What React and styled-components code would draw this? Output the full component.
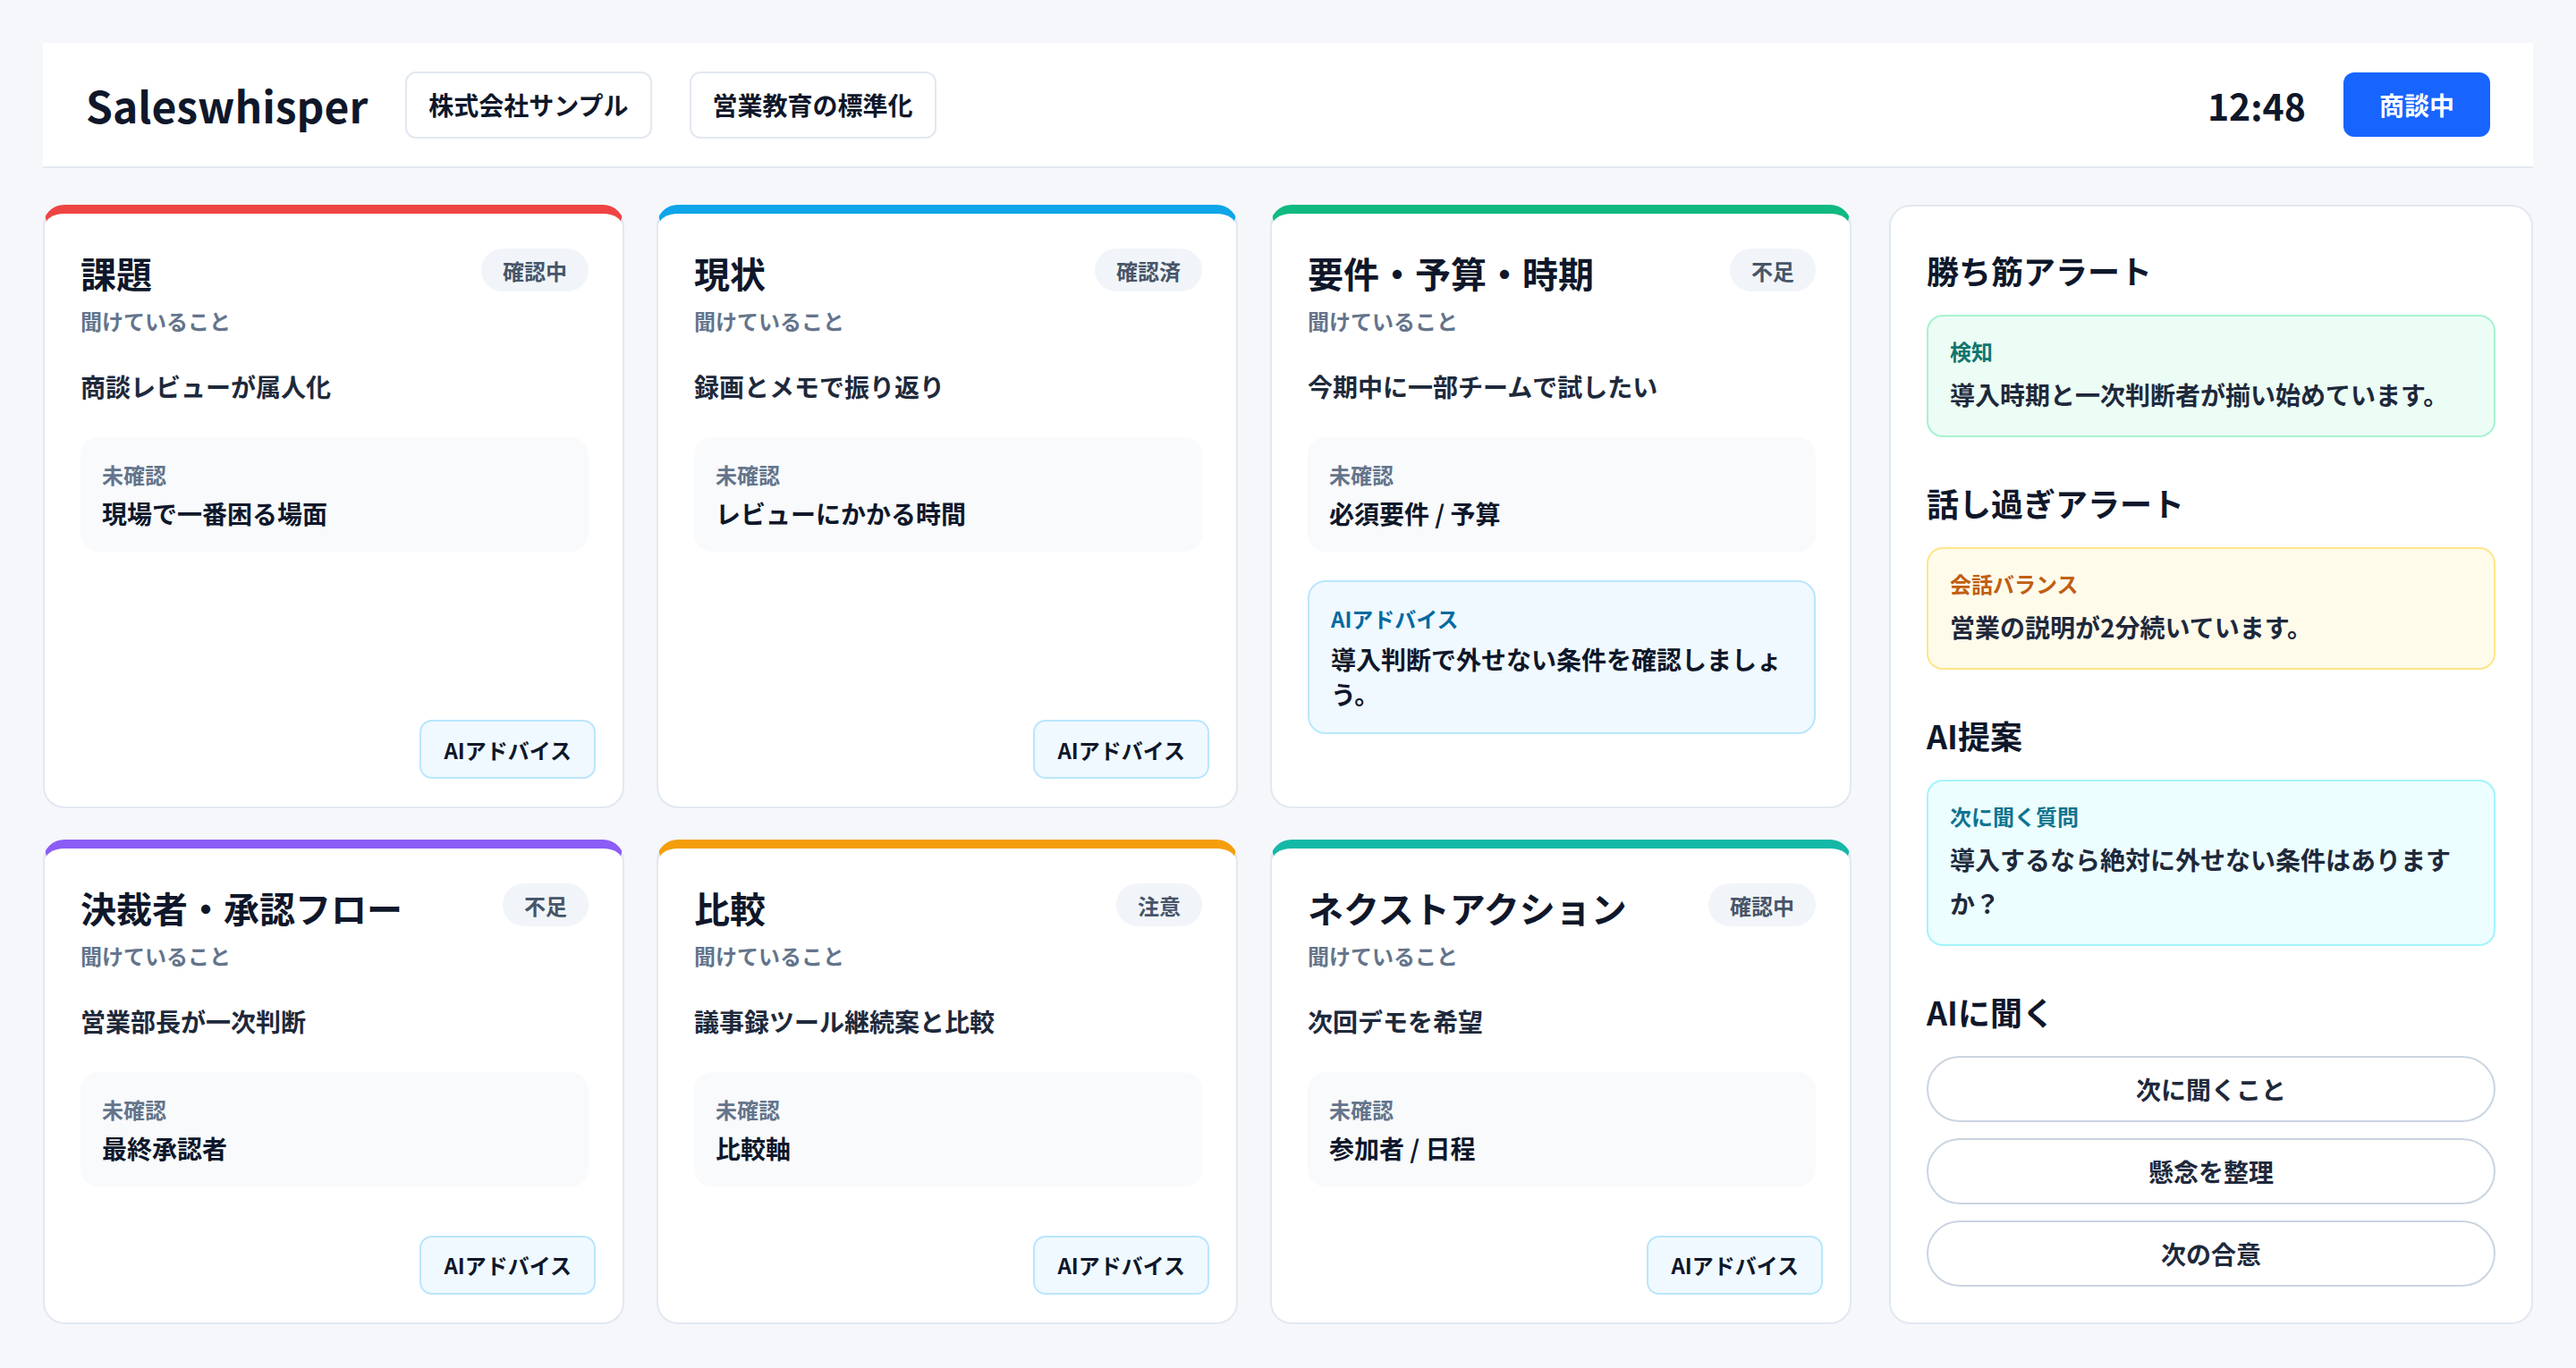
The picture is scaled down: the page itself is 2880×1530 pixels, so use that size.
import styled, { createGlobalStyle } from 'styled-components';

const GlobalStyle = createGlobalStyle`
  html, body {
    margin: 0;
    padding: 0;
    background: #f5f7fb;
  }
  body {
    font-family: "Noto Sans CJK JP", "Noto Sans", sans-serif;
    color: #0f172a;
  }
  * {
    box-sizing: border-box;
  }
`;

const cards = [
  { title: '課題', status: '確認中', accent: '#ef4444', heard: '商談レビューが属人化', pending: '現場で一番困る場面' },
  { title: '現状', status: '確認済', accent: '#0ea5e9', heard: '録画とメモで振り返り', pending: 'レビューにかかる時間' },
  {
    title: '要件・予算・時期',
    status: '不足',
    accent: '#10b981',
    heard: '今期中に一部チームで試したい',
    pending: '必須要件 / 予算',
    advice: '導入判断で外せない条件を確認しましょう。',
  },
  { title: '決裁者・承認フロー', status: '不足', accent: '#8b5cf6', heard: '営業部長が一次判断', pending: '最終承認者' },
  { title: '比較', status: '注意', accent: '#f59e0b', heard: '議事録ツール継続案と比較', pending: '比較軸' },
  { title: 'ネクストアクション', status: '確認中', accent: '#14b8a6', heard: '次回デモを希望', pending: '参加者 / 日程' },
];

const notes = [
  { heading: '勝ち筋アラート', tone: 'green', label: '検知', text: '導入時期と一次判断者が揃い始めています。' },
  { heading: '話し過ぎアラート', tone: 'yellow', label: '会話バランス', text: '営業の説明が2分続いています。' },
  { heading: 'AI提案', tone: 'cyan', label: '次に聞く質問', text: '導入するなら絶対に外せない条件はありますか？' },
];

const tones = {
  green: { bg: '#ecfdf5', border: '#a7f3d0', label: '#0f766e' },
  yellow: { bg: '#fffbeb', border: '#fde68a', label: '#bf5f12' },
  cyan: { bg: '#ecfeff', border: '#a5f3fc', label: '#0e7490' },
};

const asks = ['次に聞くこと', '懸念を整理', '次の合意'];

export default function App() {
  return (
    <>
      <GlobalStyle />
      <Page>
        <Header>
          <Logo>Saleswhisper</Logo>
          <Chip>株式会社サンプル</Chip>
          <Chip>営業教育の標準化</Chip>
          <Clock>12:48</Clock>
          <StatusButton>商談中</StatusButton>
        </Header>

        <Main>
          <CardGrid>
            {cards.map((card) => (
              <Card key={card.title} $accent={card.accent}>
                <CardHead>
                  <CardTitle>{card.title}</CardTitle>
                  <Badge>{card.status}</Badge>
                </CardHead>
                <Caption>聞けていること</Caption>
                <CardBody>
                  <Heard>{card.heard}</Heard>
                  <Pending>
                    <PendingLabel>未確認</PendingLabel>
                    <PendingValue>{card.pending}</PendingValue>
                  </Pending>
                  {card.advice && (
                    <Advice>
                      <AdviceLabel>AIアドバイス</AdviceLabel>
                      <AdviceText>{card.advice}</AdviceText>
                    </Advice>
                  )}
                </CardBody>
                {!card.advice && (
                  <CardFooter>
                    <AdviceButton>AIアドバイス</AdviceButton>
                  </CardFooter>
                )}
              </Card>
            ))}
          </CardGrid>

          <Panel>
            {notes.map((note) => (
              <Section key={note.heading}>
                <PanelHeading>{note.heading}</PanelHeading>
                <Note $tone={note.tone}>
                  <NoteLabel $tone={note.tone}>{note.label}</NoteLabel>
                  <NoteText>{note.text}</NoteText>
                </Note>
              </Section>
            ))}
            <Section>
              <PanelHeading>AIに聞く</PanelHeading>
              <AskList>
                {asks.map((ask) => (
                  <AskButton key={ask}>{ask}</AskButton>
                ))}
              </AskList>
            </Section>
          </Panel>
        </Main>
      </Page>
    </>
  );
}

const Page = styled.div`
  height: 100vh;
  padding: 48px 48px 50px;
  display: flex;
  flex-direction: column;
  gap: 41px;
`;

const Header = styled.header`
  height: 140px;
  flex: none;
  background: #ffffff;
  border-bottom: 2px solid #e2e8f0;
  padding: 0 48px;
  display: flex;
  align-items: center;
  gap: 42px;
`;

const Logo = styled.div`
  font-size: 48px;
  font-weight: 700;
  color: #0f172a;
`;

const Chip = styled.div`
  height: 75px;
  padding: 0 24px;
  border: 2px solid #e2e8f0;
  border-radius: 12px;
  display: flex;
  align-items: center;
  font-size: 28px;
  font-weight: 700;
  color: #0f172a;
  background: #ffffff;
`;

const Clock = styled.div`
  margin-left: auto;
  font-size: 41px;
  font-weight: 700;
  color: #0f172a;
`;

const StatusButton = styled.button`
  height: 72px;
  padding: 0 40px;
  border: none;
  border-radius: 12px;
  background: #1764ff;
  color: #ffffff;
  font-family: inherit;
  font-size: 28px;
  font-weight: 700;
`;

const Main = styled.main`
  flex: 1;
  min-height: 0;
  display: grid;
  grid-template-columns: 1fr 720px;
  gap: 42px;
`;

const CardGrid = styled.div`
  display: grid;
  grid-template-columns: repeat(3, 1fr);
  grid-template-rows: 674fr 541fr;
  column-gap: 36px;
  row-gap: 35px;
`;

const Card = styled.section`
  background: #ffffff;
  border: 2px solid #e2e8f0;
  border-top: 10px solid ${(p) => p.$accent};
  border-radius: 24px;
  padding: 42px 38px 0 40px;
  display: flex;
  flex-direction: column;
  min-height: 0;
`;

const CardHead = styled.div`
  display: flex;
  justify-content: space-between;
  align-items: flex-start;
  gap: 16px;
`;

const CardTitle = styled.h2`
  margin: 0;
  font-size: 40px;
  line-height: 48px;
  font-weight: 700;
  color: #0f172a;
`;

const Badge = styled.span`
  flex: none;
  height: 48px;
  padding: 0 24px;
  border-radius: 999px;
  background: #f1f5f9;
  color: #475569;
  font-size: 24px;
  font-weight: 700;
  display: flex;
  align-items: center;
  margin-top: -3px;
`;

const Caption = styled.div`
  margin-top: 12px;
  font-size: 24px;
  line-height: 36px;
  font-weight: 700;
  color: #64748b;
`;

const CardBody = styled.div`
  margin-top: 34px;
  display: flex;
  flex-direction: column;
  gap: 32px;
`;

const Heard = styled.div`
  font-size: 28px;
  line-height: 42px;
  padding-bottom: 4px;
  font-weight: 700;
  color: #1e293b;
`;

const Pending = styled.div`
  background: #f8fafc;
  border-radius: 20px;
  padding: 24px 24px 23px;
`;

const PendingLabel = styled.div`
  font-size: 24px;
  line-height: 36px;
  font-weight: 700;
  color: #64748b;
  margin-bottom: 6px;
`;

const PendingValue = styled.div`
  font-size: 28px;
  line-height: 39px;
  font-weight: 700;
  color: #0f172a;
`;

const Advice = styled.div`
  background: #f0f9ff;
  border: 2px solid #bae6fd;
  border-radius: 20px;
  padding: 23px 24px;
`;

const AdviceLabel = styled.div`
  font-size: 24px;
  line-height: 36px;
  font-weight: 700;
  color: #0369a1;
  margin-bottom: 8px;
`;

const AdviceText = styled.div`
  font-size: 28px;
  line-height: 39px;
  font-weight: 700;
  color: #0f172a;
`;

const CardFooter = styled.div`
  margin: auto -8px 0 0;
  padding: 24px 0 31px;
  display: flex;
  justify-content: flex-end;
`;

const AdviceButton = styled.button`
  height: 66px;
  padding: 0 25px;
  border: 2px solid #bae6fd;
  border-radius: 14px;
  background: #f0f9ff;
  color: #0f172a;
  font-family: inherit;
  font-size: 24px;
  font-weight: 700;
`;

const Panel = styled.aside`
  background: #ffffff;
  border: 2px solid #e2e8f0;
  border-radius: 24px;
  padding: 46px 40px 40px;
  display: flex;
  flex-direction: column;
  gap: 48px;
`;

const Section = styled.div`
  display: flex;
  flex-direction: column;
  gap: 25px;
`;

const PanelHeading = styled.h3`
  margin: 0;
  font-size: 36px;
  line-height: 50px;
  font-weight: 700;
  color: #0f172a;
`;

const Note = styled.div`
  background: ${(p) => tones[p.$tone].bg};
  border: 2px solid ${(p) => tones[p.$tone].border};
  border-radius: 18px;
  padding: 21px 24px;
`;

const NoteLabel = styled.div`
  font-size: 24px;
  line-height: 36px;
  font-weight: 700;
  color: ${(p) => tones[p.$tone].label};
  margin-bottom: 6px;
`;

const NoteText = styled.div`
  font-size: 28px;
  line-height: 49px;
  font-weight: 700;
  color: #1e293b;
`;

const AskList = styled.div`
  display: flex;
  flex-direction: column;
  gap: 18px;
`;

const AskButton = styled.button`
  height: 74px;
  border: 2px solid #cbd5e1;
  border-radius: 999px;
  background: #ffffff;
  color: #1e293b;
  font-family: inherit;
  font-size: 28px;
  font-weight: 700;
`;
